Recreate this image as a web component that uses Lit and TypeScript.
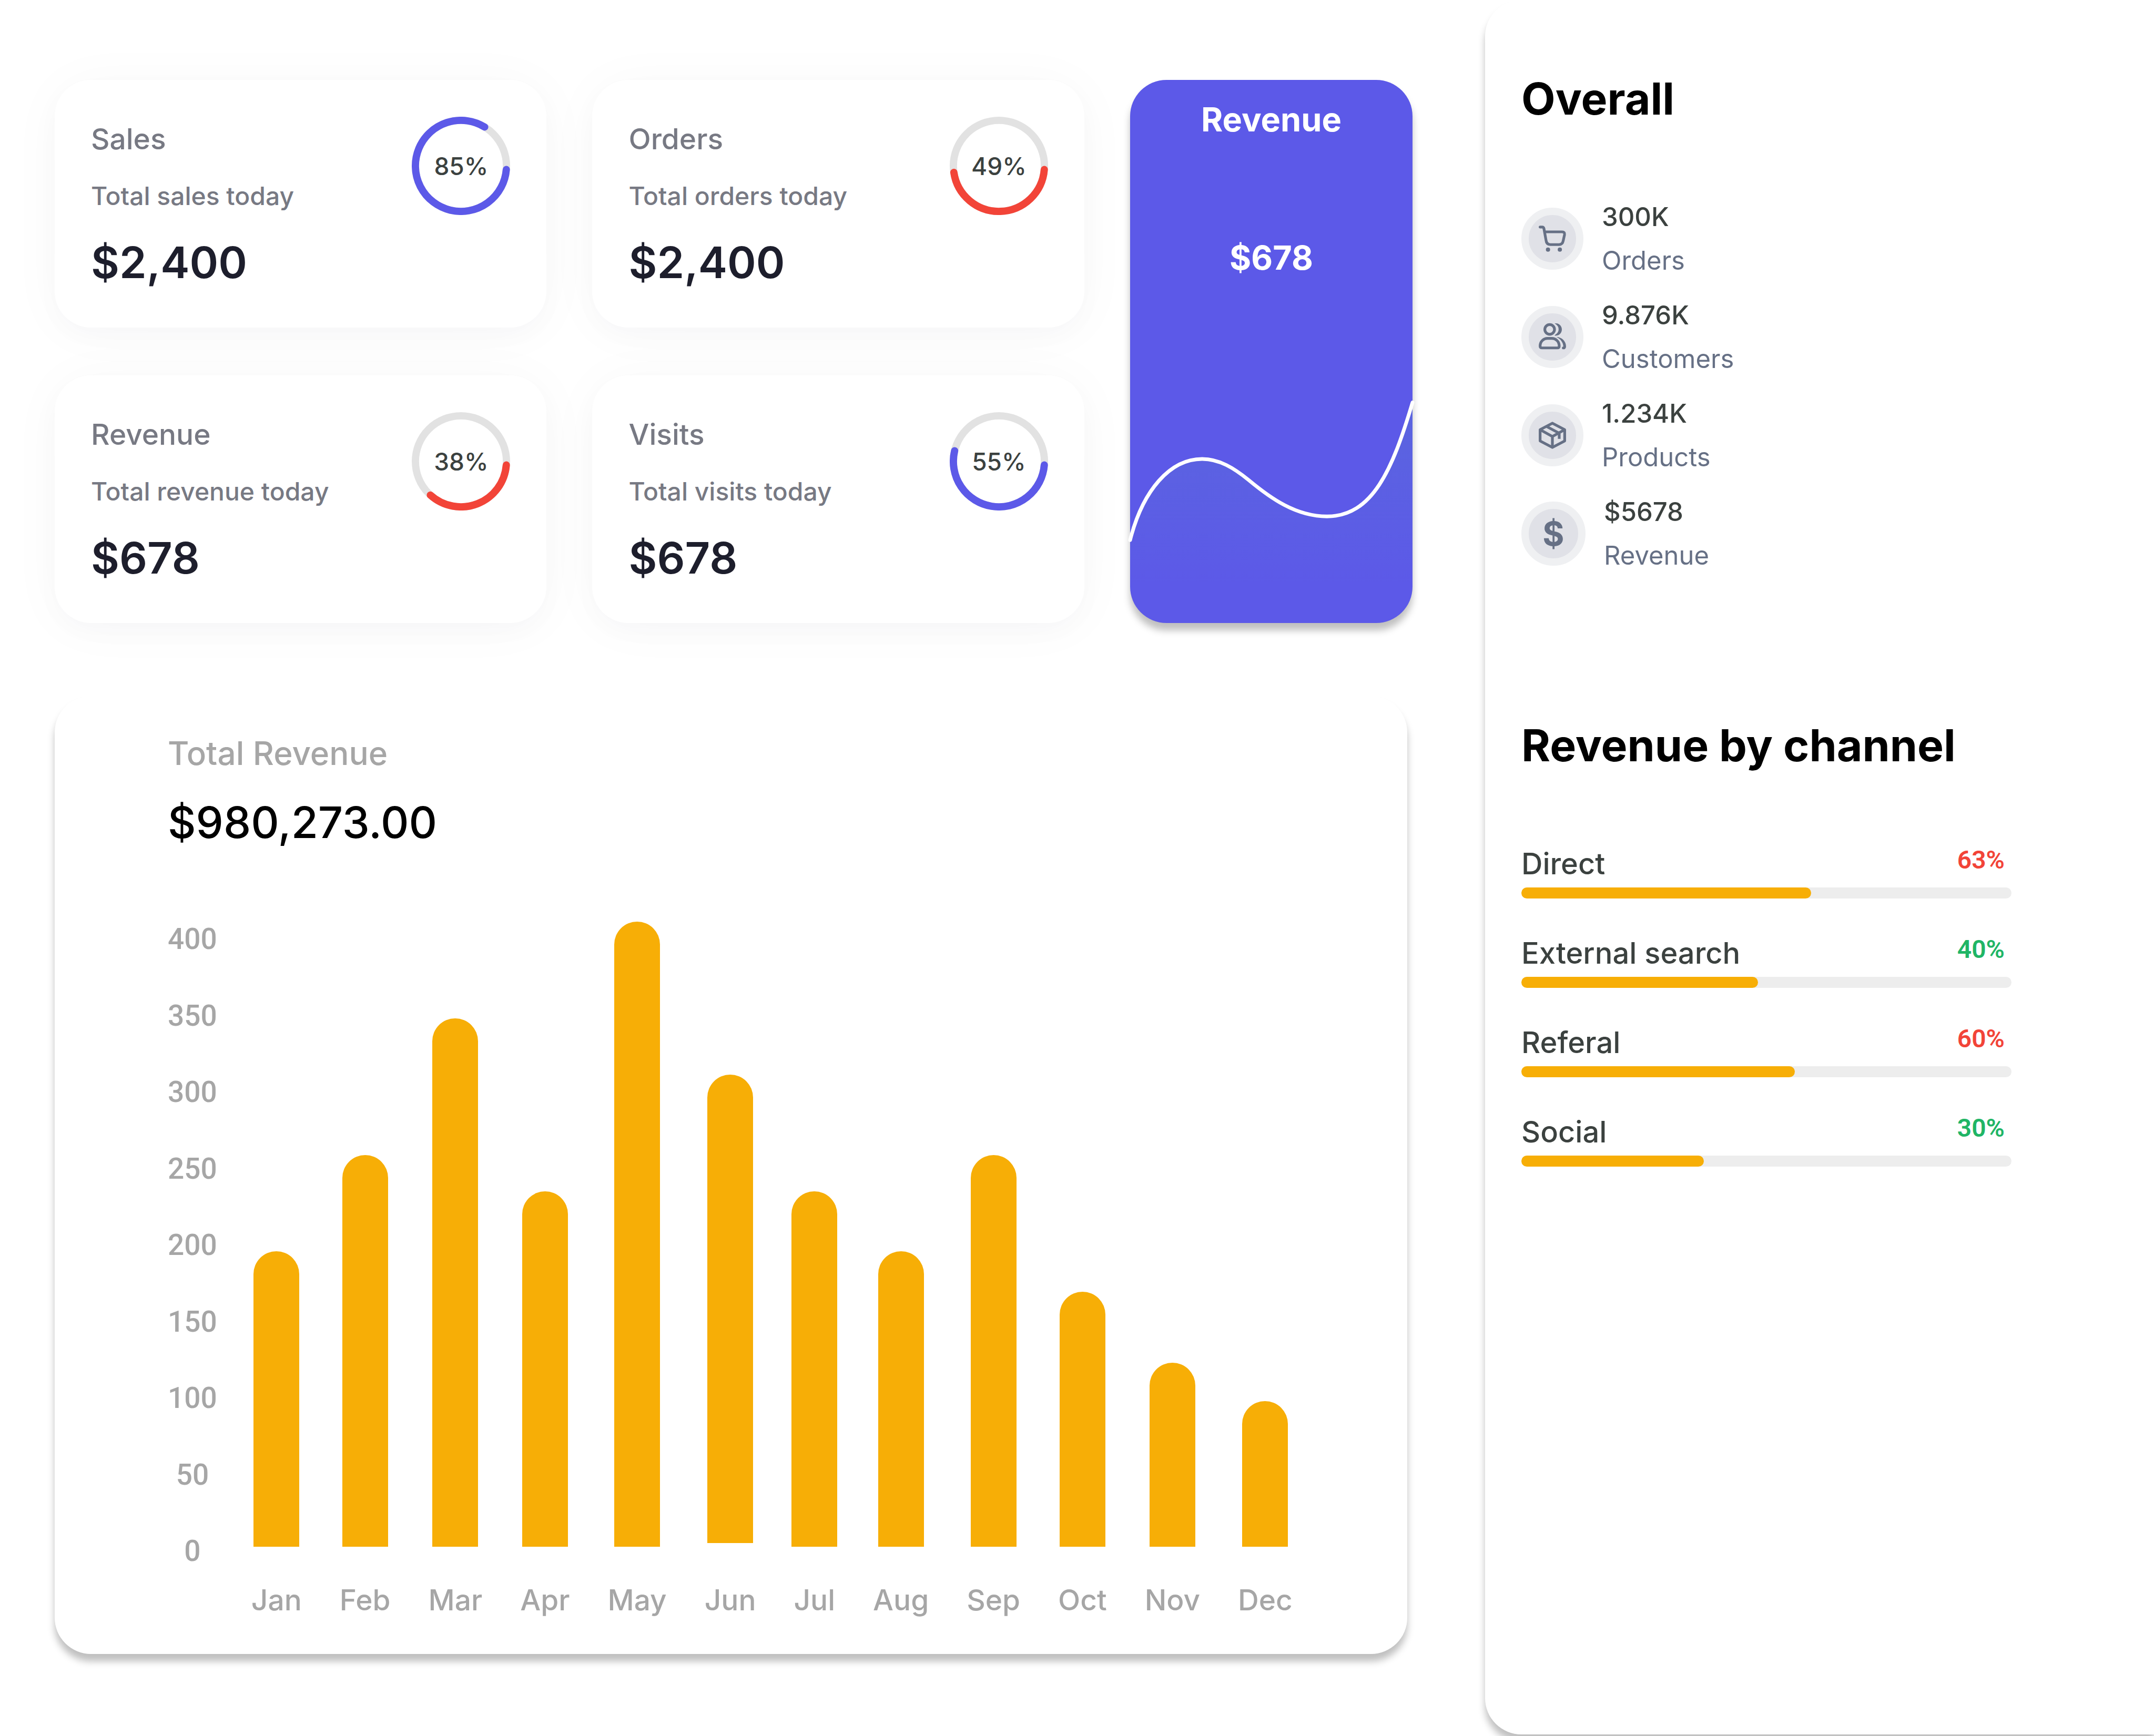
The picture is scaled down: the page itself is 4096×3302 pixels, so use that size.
import { LitElement, html, css, svg } from "lit";
import { customElement, property } from "lit/decorators.js";
import { classMap } from "lit/directives/class-map.js";
import { styleMap } from "lit/directives/style-map.js";

type Tone = "good" | "bad";

interface Stat {
  title: string;
  caption: string;
  value: string;
  percent: number;
  tone: Tone;
}

const STATS: Stat[] = [
  { title: "Sales", caption: "Total sales today", value: "$2,400", percent: 85, tone: "good" },
  { title: "Orders", caption: "Total orders today", value: "$2,400", percent: 49, tone: "bad" },
  { title: "Revenue", caption: "Total revenue today", value: "$678", percent: 38, tone: "bad" },
  { title: "Visits", caption: "Total visits today", value: "$678", percent: 55, tone: "good" },
];

const AXIS = [400, 350, 300, 250, 200, 150, 100, 50, 0];

const BAR_MAX = 343;
const MONTHS = [
  { name: "Jan", height: 162 },
  { name: "Feb", height: 215 },
  { name: "Mar", height: 290 },
  { name: "Apr", height: 195 },
  { name: "May", height: 343 },
  { name: "Jun", height: 257, raised: true },
  { name: "Jul", height: 195 },
  { name: "Aug", height: 162 },
  { name: "Sep", height: 215 },
  { name: "Oct", height: 140 },
  { name: "Nov", height: 101 },
  { name: "Dec", height: 80 },
];

/* Icons are drawn on a 312-unit square with the origin at its centre. */
const ICONS = {
  cart: svg`
    <path d="M-81-77h13q11 0 12.500 12L-42 10q3 29 29 29h57q22 0 27-24l9-41q3-19-16-19H-50" />
    <circle class="solid" cx="-29" cy="72" r="14" />
    <circle class="solid" cx="49" cy="72" r="14" />`,
  users: svg`
    <circle cx="-18" cy="-50" r="32" />
    <path d="M-69 72H33q12 0 12-12C45 30 23 9-4 9H-32C-59 9-81 30-81 60q0 12 12 12z" />
    <path class="solid" d="M15-90A41 41 0 1 1 15-9C17-17 41-23 41-50C41-75 26-80 15-90z" />
    <path class="solid" d="M26 0C62 0 90 28 90 62Q90 81 72 81Q63 81 63 72Q63 63 72 63C72 38 54 12 26 0z" />`,
  box: svg`
    <path class="sharp" d="M0-80L81-37V37L0 80L-81 37V-37z" />
    <path class="sharp" d="M-81-37L0 8L81-37M0 8V80M-38-58L45-14V23" />`,
};

const OVERALL: { value: string; label: string; icon: keyof typeof ICONS | "dollar" }[] = [
  { value: "300K", label: "Orders", icon: "cart" },
  { value: "9.876K", label: "Customers", icon: "users" },
  { value: "1.234K", label: "Products", icon: "box" },
  { value: "$5678", label: "Revenue", icon: "dollar" },
];

const CHANNELS: { name: string; percent: number; fill: number; tone: Tone }[] = [
  { name: "Direct", percent: 63, fill: 59.1, tone: "bad" },
  { name: "External search", percent: 40, fill: 48.3, tone: "good" },
  { name: "Referal", percent: 60, fill: 55.8, tone: "bad" },
  { name: "Social", percent: 30, fill: 37.2, tone: "good" },
];

@customElement("percent-ring")
class PercentRing extends LitElement {
  @property({ type: Number }) percent = 0;
  @property() tone: Tone = "good";

  static styles = css`
    :host { display: grid; place-items: center; width: 187px; height: 187px; flex: none; }
    svg, .label { grid-area: 1 / 1; }
    svg { width: 100%; height: 100%; display: block; }
    circle, path { fill: none; stroke-width: 4; stroke-linecap: round; }
    .track { stroke: #e2e2e2; }
    .good { stroke: #5c59e8; }
    .bad { stroke: #f24438; }
    .label { font-size: 46px; line-height: 64px; font-weight: 500; color: #3b413f; }
  `;

  render() {
    const radius = 25;
    /* Half of the round cap is kept free at each end of the arc. */
    const inset = 4.6;
    const point = (deg: number) => {
      const rad = (deg * Math.PI) / 180;
      return `${27 + radius * Math.cos(rad)} ${27 + radius * Math.sin(rad)}`;
    };
    const end = this.percent * 3.6 - inset;
    const large = end - inset > 180 ? 1 : 0;
    return html`
      <svg viewBox="0 0 54 54" aria-hidden="true">
        <circle class="track" cx="27" cy="27" r=${radius} />
        <path class=${this.tone} d="M${point(inset)}A${radius} ${radius} 0 ${large} 1 ${point(end)}" />
      </svg>
      <span class="label">${this.percent}%</span>
    `;
  }
}

@customElement("stat-card")
class StatCard extends LitElement {
  @property({ attribute: false }) stat!: Stat;

  static styles = css`
    :host {
      display: flex;
      justify-content: space-between;
      align-items: flex-start;
      box-sizing: border-box;
      min-height: 471px;
      padding: 70px 69px 64px;
      border-radius: 69px;
      background: #fff;
      box-shadow: 0 7px 104px rgba(0, 0, 0, 0.03), 0 17px 52px rgba(40, 50, 120, 0.02);
    }
    h3, p { margin: 0; }
    h3 { font-size: 55px; line-height: 84px; font-weight: 500; color: #777983; }
    .caption { margin-top: 32px; font-size: 48px; line-height: 70px; font-weight: 500; color: #777983; }
    .value { margin-top: 43px; font-size: 83px; line-height: 96px; font-weight: 600; color: #1d1e2c; }
  `;

  render() {
    const { title, caption, value, percent, tone } = this.stat;
    return html`
      <div>
        <h3>${title}</h3>
        <p class="caption">${caption}</p>
        <p class="value">${value}</p>
      </div>
      <percent-ring .percent=${percent} .tone=${tone}></percent-ring>
    `;
  }
}

@customElement("revenue-tile")
class RevenueTile extends LitElement {
  static styles = css`
    :host {
      display: grid;
      border-radius: 69px;
      background: #5c59e8;
      box-shadow: 0 14px 14px rgba(0, 0, 0, 0.25);
      color: #fff;
      text-align: center;
    }
    svg, .text { grid-area: 1 / 1; }
    svg { width: 100%; height: 100%; display: block; overflow: visible; }
    .line { fill: none; stroke: #fff; stroke-width: 2; stroke-linecap: round; }
    .text { padding-top: 35px; }
    h3, p { margin: 0; font-size: 63px; line-height: 80px; font-weight: 700; }
    p { margin-top: 183px; }
  `;

  render() {
    const curve =
      "M0 252.500C7 225 22 208 39.500 208C49 208 57 213 65 219.500C77 229.500 91 239.500 108 239.500C133 239.500 144 214 155 177";
    return html`
      <svg viewBox="0 0 155 298" preserveAspectRatio="none" aria-hidden="true">
        <defs>
          <linearGradient id="fade" x1="0" y1="0" x2="0" y2="1">
            <stop offset="0" stop-color="#4fd18b" stop-opacity="0.1" />
            <stop offset="1" stop-color="#4fd18b" stop-opacity="0" />
          </linearGradient>
        </defs>
        <path fill="url(#fade)" d="${curve}V278H0z" />
        <path class="line" d=${curve} />
      </svg>
      <div class="text">
        <h3>Revenue</h3>
        <p>$678</p>
      </div>
    `;
  }
}

@customElement("revenue-chart")
class RevenueChart extends LitElement {
  static styles = css`
    :host {
      display: block;
      padding: 69px 218px 71px 215px;
      border-radius: 69px;
      background: #fff;
      box-shadow: 0 14px 14px rgba(0, 0, 0, 0.25);
    }
    h2, p { margin: 0; font-weight: 500; }
    h2 { font-size: 62px; line-height: 80px; color: #a6a6a6; }
    .total { margin-top: 43px; font-size: 83px; line-height: 96px; color: #000; }
    .plot { display: flex; align-items: flex-start; gap: 65px; margin-top: 141px; color: #a6a6a6; }
    .axis {
      display: flex;
      flex-direction: column;
      align-items: center;
      justify-content: space-between;
      height: 1228px;
      padding-top: 1px;
      font: 500 55px/64px Roboto, sans-serif;
    }
    .months { flex: 1; display: flex; justify-content: space-between; }
    .month { display: flex; flex-direction: column; align-items: center; gap: 69px; }
    .slot { width: 0; height: 1189px; display: flex; align-items: flex-end; justify-content: center; }
    .bar { flex: none; width: 87px; border-radius: 44px 44px 0 0; background: #f7ae06; }
    .bar.raised { margin-bottom: 7px; }
    .name { font-size: 55px; line-height: 64px; font-weight: 500; }
  `;

  render() {
    return html`
      <h2>Total Revenue</h2>
      <p class="total">$980,273.00</p>
      <div class="plot">
        <div class="axis">${AXIS.map((tick) => html`<span>${tick}</span>`)}</div>
        <div class="months">
          ${MONTHS.map(
            (m) => html`
              <div class="month">
                <div class="slot">
                  <div
                    class=${classMap({ bar: true, raised: !!m.raised })}
                    style=${styleMap({ height: `${(m.height / BAR_MAX) * 100}%` })}
                  ></div>
                </div>
                <span class="name">${m.name}</span>
              </div>
            `,
          )}
        </div>
      </div>
    `;
  }
}

@customElement("overall-panel")
class OverallPanel extends LitElement {
  static styles = css`
    :host {
      display: block;
      box-sizing: border-box;
      padding: 140px 69px;
      border-radius: 69px 0 0 69px;
      background: #fff;
      box-shadow: 0 14px 14px rgba(0, 0, 0, 0.25);
    }
    h2, ul { margin: 0; padding: 0; }
    ul { list-style: none; display: flex; flex-direction: column; }
    h2 { font-size: 84px; line-height: 96px; font-weight: 700; color: #000; }
    .facts { margin-top: 135px; gap: 21px; }
    .fact { display: flex; align-items: center; gap: 35px; }
    .badge {
      display: grid;
      place-items: center;
      width: 90px;
      height: 90px;
      border: 14px solid #eff0f2;
      border-radius: 50%;
      background: #e0e1e7;
      color: #667085;
    }
    .badge.wide { width: 94px; height: 94px; }
    .badge svg { width: 90px; height: 90px; display: block; fill: none; stroke: currentColor; stroke-width: 18; stroke-linecap: round; stroke-linejoin: round; }
    .badge .solid { fill: currentColor; stroke: none; }
    .badge .sharp { stroke-linecap: butt; }
    .sign { font-size: 63px; line-height: 80px; font-weight: 700; }
    .words { display: flex; flex-direction: column; font-size: 49px; line-height: 83px; }
    .value { font-weight: 500; color: #3b413f; }
    .label { color: #667085; }
    .by-channel { margin-top: 272px; }
    .channels { margin-top: 145px; gap: 72px; max-width: 932px; }
    .head { display: flex; justify-content: space-between; align-items: flex-start; padding-right: 13px; }
    .name { font-size: 56px; line-height: 64px; font-weight: 500; color: #3b413f; }
    .percent { font: 600 48px/50px Roboto, sans-serif; }
    .good { color: #20b565; }
    .bad { color: #f24438; }
    .track { height: 21px; margin-top: 13px; border-radius: 11px; background: #ededed; }
    .fill { height: 100%; border-radius: 11px; background: #f7ae06; }
  `;

  render() {
    return html`
      <section>
        <h2>Overall</h2>
        <ul class="facts">
          ${OVERALL.map(
            (fact) => html`
              <li class="fact">
                <span class=${classMap({ badge: true, wide: fact.icon === "dollar" })}>
                  ${fact.icon === "dollar"
                    ? html`<span class="sign">$</span>`
                    : html`<svg viewBox="-156 -156 312 312" aria-hidden="true">${ICONS[fact.icon]}</svg>`}
                </span>
                <span class="words">
                  <span class="value">${fact.value}</span>
                  <span class="label">${fact.label}</span>
                </span>
              </li>
            `,
          )}
        </ul>
      </section>
      <section class="by-channel">
        <h2>Revenue by channel</h2>
        <ul class="channels">
          ${CHANNELS.map(
            (channel) => html`
              <li>
                <div class="head">
                  <span class="name">${channel.name}</span>
                  <span class="percent ${channel.tone}">${channel.percent}%</span>
                </div>
                <div class="track">
                  <div class="fill" style=${styleMap({ width: `${channel.fill}%` })}></div>
                </div>
              </li>
            `,
          )}
        </ul>
      </section>
    `;
  }
}

@customElement("app-root")
class AppRoot extends LitElement {
  static styles = css`
    :host {
      display: grid;
      grid-template-columns: minmax(0, 2824fr) minmax(0, 1272fr);
      min-height: 100vh;
      box-sizing: border-box;
      padding-bottom: 3px;
      overflow: hidden;
      background: #fff;
      font-family: Inter, "Liberation Sans", sans-serif;
    }
    main { padding: 152px 138px 151px 104px; }
    .tiles {
      display: grid;
      grid-template-columns: 270fr 270fr 155fr;
      column-gap: 87px;
      row-gap: 91px;
      margin-bottom: 139px;
    }
    revenue-tile { grid-column: 3; grid-row: 1 / span 2; }
    revenue-chart { margin-right: 10px; }
  `;

  render() {
    return html`
      <main>
        <div class="tiles">
          ${STATS.map((stat) => html`<stat-card .stat=${stat}></stat-card>`)}
          <revenue-tile></revenue-tile>
        </div>
        <revenue-chart></revenue-chart>
      </main>
      <overall-panel></overall-panel>
    `;
  }
}
